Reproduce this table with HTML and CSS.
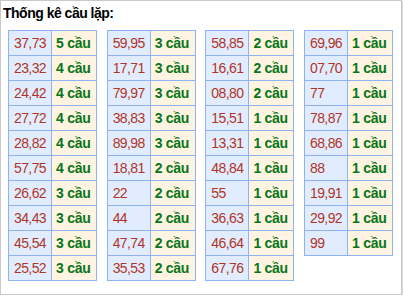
FILE: index.html
```html
<!DOCTYPE html>
<html lang="vi">
<head>
<meta charset="utf-8">
<title>Thống kê cầu lặp</title>
<link rel="stylesheet" href="styles.css">
</head>
<body>
<div class="box">
  <div class="title">Thống kê cầu lặp:</div>
  <div class="tables">
    <table class="tk">
      <tr><td class="num">37,73</td><td class="cau">5 cầu</td></tr>
      <tr><td class="num">23,32</td><td class="cau">4 cầu</td></tr>
      <tr><td class="num">24,42</td><td class="cau">4 cầu</td></tr>
      <tr><td class="num">27,72</td><td class="cau">4 cầu</td></tr>
      <tr><td class="num">28,82</td><td class="cau">4 cầu</td></tr>
      <tr><td class="num">57,75</td><td class="cau">4 cầu</td></tr>
      <tr><td class="num">26,62</td><td class="cau">3 cầu</td></tr>
      <tr><td class="num">34,43</td><td class="cau">3 cầu</td></tr>
      <tr><td class="num">45,54</td><td class="cau">3 cầu</td></tr>
      <tr><td class="num">25,52</td><td class="cau">3 cầu</td></tr>
    </table>
    <table class="tk">
      <tr><td class="num">59,95</td><td class="cau">3 cầu</td></tr>
      <tr><td class="num">17,71</td><td class="cau">3 cầu</td></tr>
      <tr><td class="num">79,97</td><td class="cau">3 cầu</td></tr>
      <tr><td class="num">38,83</td><td class="cau">3 cầu</td></tr>
      <tr><td class="num">89,98</td><td class="cau">3 cầu</td></tr>
      <tr><td class="num">18,81</td><td class="cau">2 cầu</td></tr>
      <tr><td class="num">22</td><td class="cau">2 cầu</td></tr>
      <tr><td class="num">44</td><td class="cau">2 cầu</td></tr>
      <tr><td class="num">47,74</td><td class="cau">2 cầu</td></tr>
      <tr><td class="num">35,53</td><td class="cau">2 cầu</td></tr>
    </table>
    <table class="tk">
      <tr><td class="num">58,85</td><td class="cau">2 cầu</td></tr>
      <tr><td class="num">16,61</td><td class="cau">2 cầu</td></tr>
      <tr><td class="num">08,80</td><td class="cau">2 cầu</td></tr>
      <tr><td class="num">15,51</td><td class="cau">1 cầu</td></tr>
      <tr><td class="num">13,31</td><td class="cau">1 cầu</td></tr>
      <tr><td class="num">48,84</td><td class="cau">1 cầu</td></tr>
      <tr><td class="num">55</td><td class="cau">1 cầu</td></tr>
      <tr><td class="num">36,63</td><td class="cau">1 cầu</td></tr>
      <tr><td class="num">46,64</td><td class="cau">1 cầu</td></tr>
      <tr><td class="num">67,76</td><td class="cau">1 cầu</td></tr>
    </table>
    <table class="tk">
      <tr><td class="num">69,96</td><td class="cau">1 cầu</td></tr>
      <tr><td class="num">07,70</td><td class="cau">1 cầu</td></tr>
      <tr><td class="num">77</td><td class="cau">1 cầu</td></tr>
      <tr><td class="num">78,87</td><td class="cau">1 cầu</td></tr>
      <tr><td class="num">68,86</td><td class="cau">1 cầu</td></tr>
      <tr><td class="num">88</td><td class="cau">1 cầu</td></tr>
      <tr><td class="num">19,91</td><td class="cau">1 cầu</td></tr>
      <tr><td class="num">29,92</td><td class="cau">1 cầu</td></tr>
      <tr><td class="num">99</td><td class="cau">1 cầu</td></tr>
    </table>
  </div>
</div>
</body>
</html>
```
FILE: styles.css
```css
html, body {
  margin: 0;
  padding: 0;
  background: #ffffff;
}
body {
  font-family: "Liberation Sans", Arial, sans-serif;
  font-size: 14px;
}
.box {
  box-sizing: border-box;
  width: 402px;
  height: 295px;
  border: 1px solid #c8c8c8;
  box-shadow: 1px 1px 0 #d8d8d8;
}
.title {
  height: 29px;
  box-sizing: border-box;
  padding: 4px 0 0 2px;
  font-weight: bold;
  font-size: 14px;
  letter-spacing: -0.5px;
  color: #000;
  line-height: 17px;
}
.tables {
  display: flex;
  align-items: flex-start;
  gap: 9.67px;
  padding-left: 7px;
}
.tk {
  width: 89px;
  border-collapse: collapse;
  table-layout: fixed;
}
.tk td {
  border: 1px solid #8fb3f0;
  height: 25px;
  padding: 0 0 0 4px;
  box-sizing: border-box;
  white-space: nowrap;
  line-height: 16px;
}
.tk .num {
  width: 49%;
  padding-left: 5px;
  background: #e1edff;
  color: #b03526;
  letter-spacing: -0.6px;
}
.tk .cau {
  background: #fff4e1;
  color: #07761a;
  font-weight: bold;
  letter-spacing: -0.3px;
}
```
